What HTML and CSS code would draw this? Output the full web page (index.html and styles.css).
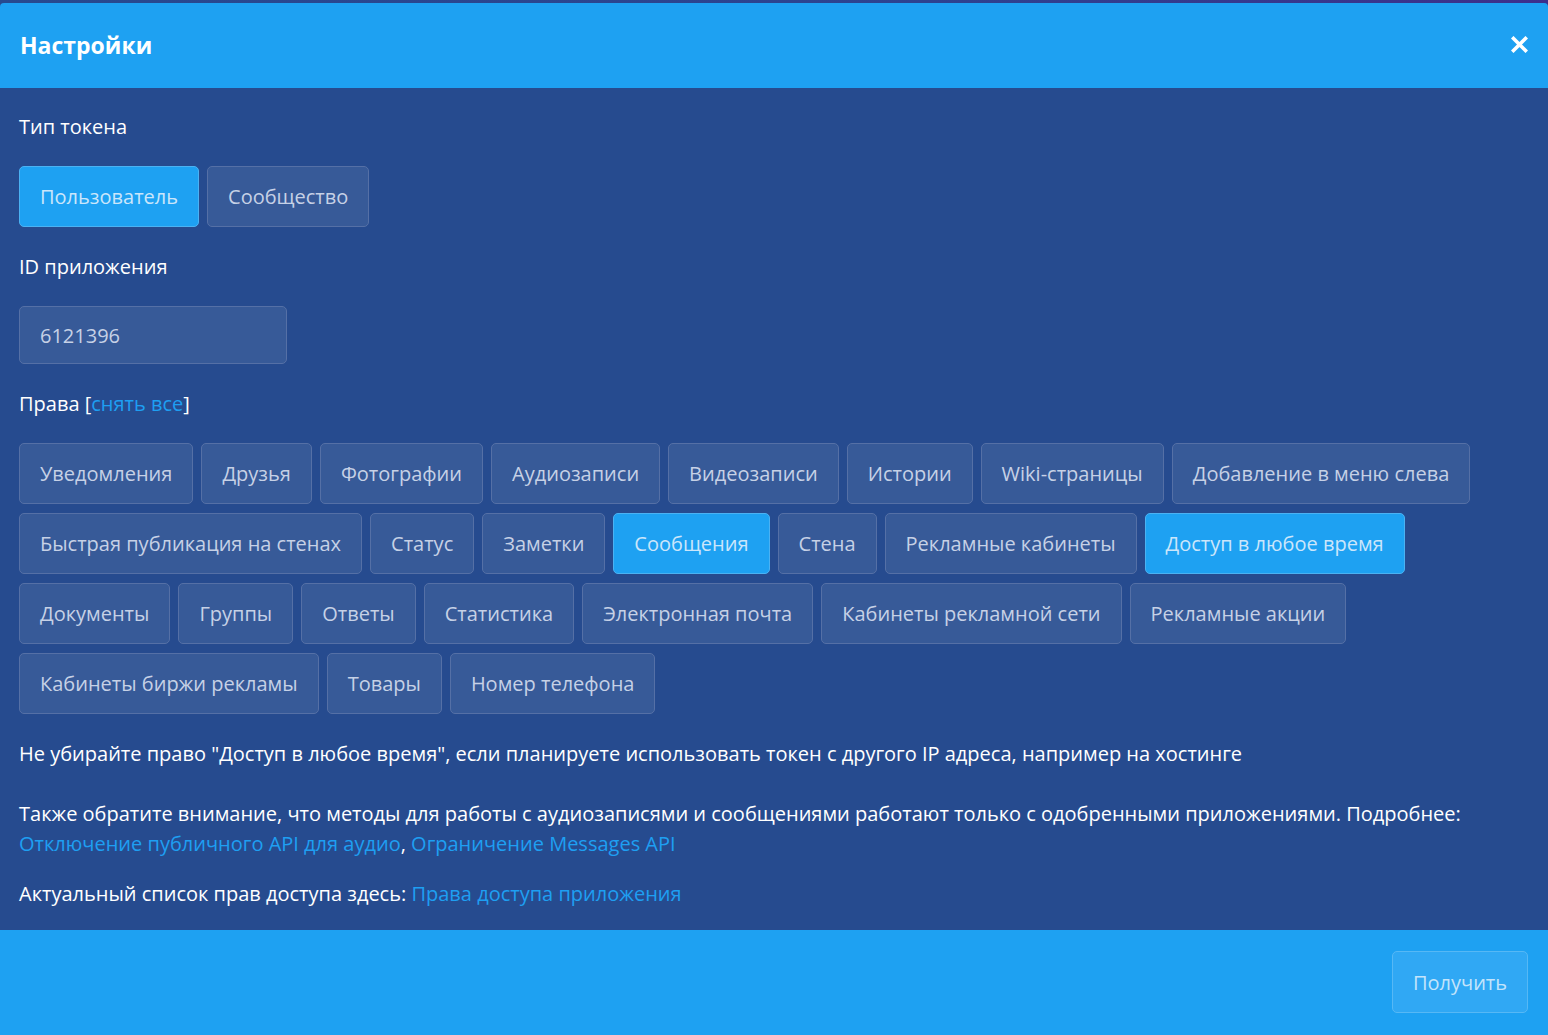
FILE: index.html
```html
<!DOCTYPE html>
<html lang="ru">
<head>
<meta charset="utf-8">
<title>Настройки</title>
<link rel="stylesheet" href="styles.css">
</head>
<body>
<div class="modal">
  <header class="modal-header">
    <h1 class="modal-title">Настройки</h1>
    <button class="close" type="button" aria-label="Закрыть">
      <svg width="17" height="17" viewBox="0 0 17 17"><path d="M2.5 2.5 L14.5 14.5 M14.5 2.5 L2.5 14.5" stroke="#fff" stroke-width="3.6" stroke-linecap="square"/></svg>
    </button>
  </header>
  <div class="modal-body">
    <div class="label">Тип токена</div>
    <div class="group">
      <button class="btn active" type="button">Пользователь</button>
      <button class="btn" type="button">Сообщество</button>
    </div>
    <div class="label">ID приложения</div>
    <div class="group">
      <input class="field" type="text" value="6121396">
    </div>
    <div class="label">Права [<a href="#" class="link">снять все</a>]</div>
    <div class="group perms">
      <button class="btn" type="button">Уведомления</button>
      <button class="btn" type="button">Друзья</button>
      <button class="btn" type="button">Фотографии</button>
      <button class="btn" type="button">Аудиозаписи</button>
      <button class="btn" type="button">Видеозаписи</button>
      <button class="btn" type="button">Истории</button>
      <button class="btn" type="button">Wiki-страницы</button>
      <button class="btn" type="button">Добавление в меню слева</button>
      <button class="btn" type="button">Быстрая публикация на стенах</button>
      <button class="btn" type="button">Статус</button>
      <button class="btn" type="button">Заметки</button>
      <button class="btn active" type="button">Сообщения</button>
      <button class="btn" type="button">Стена</button>
      <button class="btn" type="button">Рекламные кабинеты</button>
      <button class="btn active" type="button">Доступ в любое время</button>
      <button class="btn" type="button">Документы</button>
      <button class="btn" type="button">Группы</button>
      <button class="btn" type="button">Ответы</button>
      <button class="btn" type="button">Статистика</button>
      <button class="btn" type="button">Электронная почта</button>
      <button class="btn" type="button">Кабинеты рекламной сети</button>
      <button class="btn" type="button">Рекламные акции</button>
      <button class="btn" type="button">Кабинеты биржи рекламы</button>
      <button class="btn" type="button">Товары</button>
      <button class="btn" type="button">Номер телефона</button>
    </div>
    <p class="note note-first">Не убирайте право "Доступ в любое время", если планируете использовать токен с другого IP адреса, например на хостинге</p>
    <p class="note">Также обратите внимание, что методы для работы с аудиозаписями и сообщениями работают только с одобренными приложениями. Подробнее:<br><a href="#" class="link">Отключение публичного API для аудио</a>, <a href="#" class="link">Ограничение Messages API</a></p>
    <p class="note note-last">Актуальный список прав доступа здесь: <a href="#" class="link">Права доступа приложения</a></p>
  </div>
  <footer class="modal-footer">
    <button class="btn btn-submit" type="button">Получить</button>
  </footer>
</div>
</body>
</html>
```

FILE: styles.css
```css
* { box-sizing: border-box; }

html, body {
  margin: 0;
  padding: 0;
}

body {
  background: linear-gradient(90deg, #27498f 0%, #2d4290 60%, #3d2f8c 100%);
  font-family: "Open Sans", "Noto Sans", "DejaVu Sans", sans-serif;
  color: #fff;
  height: 1035px;
  overflow: hidden;
}

.modal {
  margin-top: 3px;
  background: #264b8f;
  border-radius: 4px 4px 0 0;
  overflow: hidden;
}

.modal-header {
  height: 85px;
  background: #1ea1f2;
  display: flex;
  align-items: center;
  justify-content: space-between;
  padding: 0 20px 0 20px;
}

.modal-title {
  margin: 0;
  font-size: 23px;
  font-weight: 700;
  line-height: 30px;
  color: #fff;
  padding-bottom: 2px;
}

.close {
  background: none;
  border: 0;
  padding: 0;
  margin: 0 0 2px 0;
  width: 17px;
  height: 17px;
  display: flex;
  cursor: pointer;
}

.modal-body {
  padding: 25px 19px 21px 19px;
}

.label {
  font-size: 20px;
  line-height: 28px;
  margin-bottom: 25px;
  color: #fff;
}

.group {
  display: flex;
  flex-wrap: wrap;
  gap: 9px 8px;
  margin-bottom: 26px;
}

.perms {
  margin-bottom: 25px;
}

.btn {
  font-family: inherit;
  font-size: 20px;
  line-height: 27px;
  height: 61px;
  padding: 0 20px;
  background: #375a98;
  border: 1px solid #5570a6;
  border-radius: 5px;
  color: #c6d1e6;
  cursor: pointer;
}

.btn.active {
  background: #1ea1f2;
  border-color: #4bb2f3;
  color: #cbe6fb;
}

.field {
  width: 268px;
  height: 58px;
  font-family: inherit;
  font-size: 20px;
  padding: 0 20px;
  background: #375a98;
  border: 1px solid #5570a6;
  border-radius: 5px;
  color: #c6d1e6;
  outline: none;
}

.link {
  color: #1e9ff2;
  text-decoration: none;
}

.note {
  margin: 0 0 20px 0;
  font-size: 20px;
  line-height: 30px;
  color: #fff;
}

.note-first {
  margin-bottom: 30px;
}

.note-last {
  margin-bottom: 0;
}

.modal-footer {
  background: #1ea1f2;
  height: 105px;
  padding: 21px 20px;
  display: flex;
  justify-content: flex-end;
}

.btn-submit {
  height: 62px;
  width: 136px;
  padding: 0;
  background: #30a8f4;
  border-color: #56b8f5;
  color: #c3e4fb;
}
```
